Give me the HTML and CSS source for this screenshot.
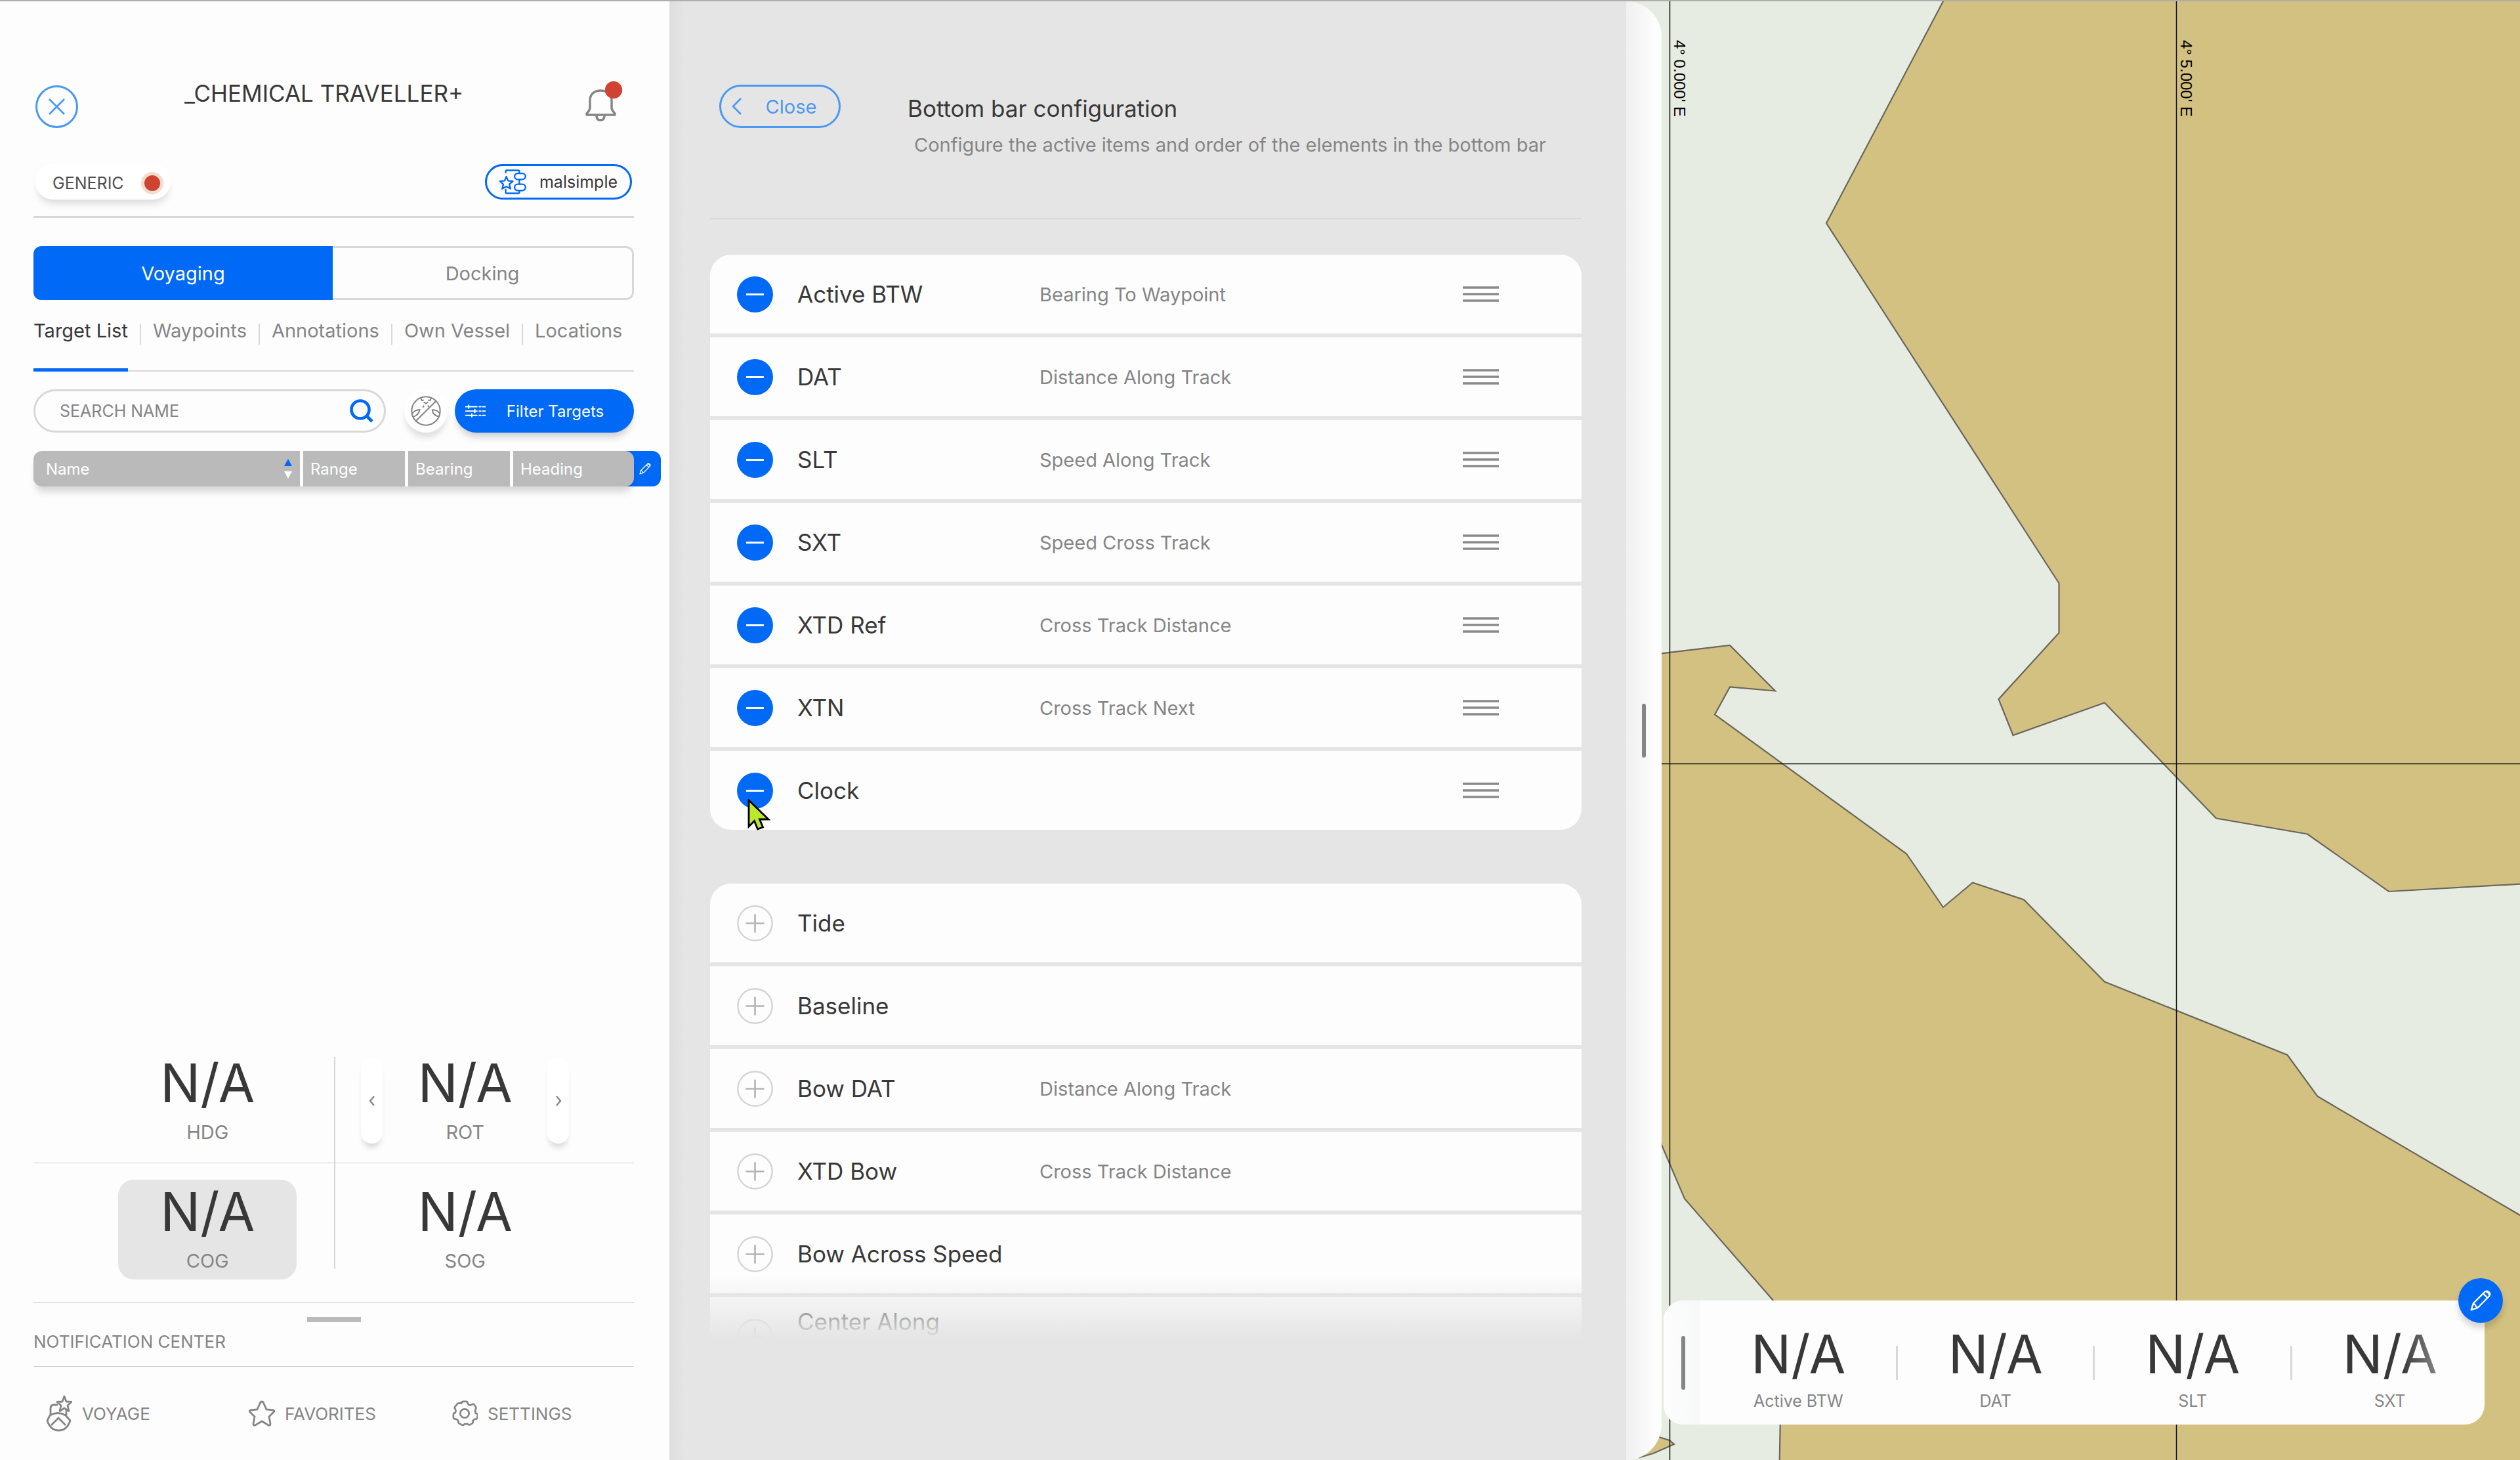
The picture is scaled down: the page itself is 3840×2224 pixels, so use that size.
FILE: index.html
```
<!DOCTYPE html>
<html lang="en">
<head>
<meta charset="utf-8">
<title>Bottom bar configuration</title>
<link rel="stylesheet" href="styles.css">
</head>
<body>
<svg class="sprite" aria-hidden="true">
  <symbol id="minus" viewBox="0 0 55 55"><circle cx="27.500" cy="27.500" r="27.500" fill="#0069f5"/><path d="M14 27.500h27" stroke="#fff" stroke-width="3"/></symbol>
  <symbol id="plus" viewBox="0 0 55 55"><circle cx="27.500" cy="27.500" r="26.200" fill="none" stroke="#d4d4d4" stroke-width="2.400"/><path d="M13.500 27.500h28M27.500 13.500v28" stroke="#b4b4b4" stroke-width="2.600"/></symbol>
  <symbol id="grip" viewBox="0 0 55 26"><path d="M0 3h55M0 13h55M0 23h55" stroke="#8a8a8a" stroke-width="3.400"/></symbol>
  <symbol id="pencil" viewBox="0 0 40 40"><path d="M4 36l3.500-11L27 5.500q3.500-3 7 .3t.4 7L15 32.500zM7.500 25l3 2 1.700 3.300 2.800 2.200M24.500 8.500l7 7M29.500 5.500q5 1 5 6" fill="none" stroke="#fff" stroke-width="2.600" stroke-linejoin="round"/></symbol>
</svg>
<div class="app">
  <aside class="sidebar">
    <header class="vessel">
      <button class="dismiss" aria-label="Close panel"><svg viewBox="0 0 65 65"><path d="M21 21l23 23M44 21L21 44" stroke="#4a98f0" stroke-width="2.600"/></svg></button>
      <h1 class="vessel-name">_CHEMICAL TRAVELLER+</h1>
      <button class="bell" aria-label="Notifications"><svg viewBox="885 118 66 68"><g fill="none" stroke="#858585" stroke-width="3.400" stroke-linejoin="round"><path d="M899 163v-12c0-10 7-15 16-15s17 5 17 15v12q1 4 5 8v2h-43v-2q4-4 5-8z"/><path d="M909 174q0 7 6 7t6-7"/></g><circle cx="935" cy="135" r="13.200" fill="#d04333"/></svg></button>
    </header>
    <div class="profile">
      <button class="generic">GENERIC<span class="status"></span></button>
      <button class="route"><svg viewBox="0 0 124 114"><g fill="none" stroke="#0069f5" stroke-width="7" stroke-linejoin="round" stroke-linecap="round"><path d="M32 33l8 19 22 2-16 14 5 21-19-11-19 11 5-21L2 54l22-2z"/><path d="M29 15V8q0-4 4-4h54q5 0 5 5v8M92 47v20M92 98v7q0 5-5 5H33q-4 0-4-4V92"/><rect x="70" y="18" width="50" height="28" rx="14"/><rect x="70" y="68" width="50" height="29" rx="14"/></g></svg>malsimple</button>
    </div>
    <div class="mode">
      <button class="mode-option selected">Voyaging</button>
      <button class="mode-option">Docking</button>
    </div>
    <nav class="tabs">
      <a class="tab current" href="#">Target List</a><i></i>
      <a class="tab" href="#">Waypoints</a><i></i>
      <a class="tab" href="#">Annotations</a><i></i>
      <a class="tab" href="#">Own Vessel</a><i></i>
      <a class="tab" href="#">Locations</a>
    </nav>
    <div class="tools">
      <div class="search">
        <input class="search-input" type="text" placeholder="SEARCH NAME" aria-label="Search name">
        <button class="search-button" aria-label="Search"><svg viewBox="0 0 36 36"><circle cx="16" cy="16" r="13.500" fill="none" stroke="#0069f5" stroke-width="4.600"/><path d="M25.500 25.500l8.500 8.500" stroke="#0069f5" stroke-width="5"/></svg></button>
      </div>
      <button class="globe" aria-label="Hide anchored"><svg viewBox="0 0 136 136"><g fill="none" stroke="#858585" stroke-width="6"><circle cx="68" cy="68" r="64"/><path d="M23 113L114 23M5 80q14-17 35-18-4 26-31 33M131 80q-14-18-34-17 2 24 29 31M44 9l6 12 8-2M92 9l-5 12-8-2M58 28l10 7 10-7M54 52l6-8M76 43l6 7"/></g></svg></button>
      <button class="filter"><svg viewBox="0 0 94 62"><path d="M2 10h52M2 30h52M2 50h52M16 3v14M44 23v14M30 43v14M64 10h8M64 30h8M64 50h8M80 10h12M80 30h12M80 50h12" stroke="#fff" stroke-width="6" stroke-linecap="round"/></svg>Filter Targets</button>
    </div>
    <div class="targets">
      <table class="target-table">
        <thead><tr>
          <th class="col-name"><span class="sortable">Name<svg viewBox="0 0 12 30"><path d="M6 0l6 11H0z" fill="#0069f5"/><path d="M0 19h12L6 30z" fill="#fff"/></svg></span></th>
          <th class="col-mid">Range</th><th class="col-mid">Bearing</th><th>Heading</th>
        </tr></thead>
      </table>
      <button class="edit-columns" aria-label="Edit columns"><svg><use href="#pencil"/></svg></button>
    </div>

    <section class="gauges">
      <div class="gauge-row">
        <div class="gauge"><strong>N/A</strong><span>HDG</span></div>
        <div class="stepper">
          <button class="step" aria-label="Previous"><svg viewBox="0 0 10 16"><path d="M8 1L2 8l6 7" fill="none" stroke="#858585" stroke-width="2.400"/></svg></button>
          <div class="gauge"><strong>N/A</strong><span>ROT</span></div>
          <button class="step" aria-label="Next"><svg viewBox="0 0 10 16"><path d="M2 1l6 7-6 7" fill="none" stroke="#858585" stroke-width="2.400"/></svg></button>
        </div>
      </div>
      <div class="gauge-row lower">
        <div class="gauge active"><strong>N/A</strong><span>COG</span></div>
        <div class="gauge"><strong>N/A</strong><span>SOG</span></div>
      </div>
    </section>
    <section class="notifications">
      <div class="drag"></div>
      <h2>NOTIFICATION CENTER</h2>
    </section>
    <nav class="menu">
      <a href="#"><svg class="voyage-icon" viewBox="0 0 40 56"><g fill="none" stroke="#858585" stroke-width="2.800" stroke-linejoin="round"><path d="M28 2l3 8 8 .5-6 5.500 2 8.500-7-4.500-7 4.500 2-8.500-6-5.500 8-.5z"/><path d="M18 15h-6q-5 0-5 6v9M31 22v9M6 31q12-7 24 0l7 8q-5 15-17.500 15T2 39zM8 46l11-11 11 11"/></g></svg>VOYAGE</a>
      <a href="#"><svg viewBox="0 0 40 40"><path d="M20 2q2 0 3 3l4 9 10 1q3 1 1 3l-7 7 2 11q0 3-3 2l-10-6-10 6q-3 1-3-2l2-11-7-7q-2-2 1-3l10-1 4-9q1-3 3-3z" fill="none" stroke="#858585" stroke-width="2.800"/></svg>FAVORITES</a>
      <a href="#"><svg viewBox="0 0 42 42"><g fill="none" stroke="#858585" stroke-width="2.800" stroke-linejoin="round"><circle cx="21" cy="21" r="7"/><path d="M16 5q0-3 3-3h4q3 0 3 3l1 2 3 1 2-1q3-2 5 1l2 3q1 2-1 4v3l1 3q3 0 3 3l-1 4q-1 3-3 2l-2 1-2 2q1 3-1 4l-3 2q-2 1-4-1h-5q-3 3-5 1l-4-2q-2-2-1-4l-2-2-3-1q-3 0-3-3v-4q0-3 3-3l1-3-1-3q-2-2 0-4l3-4q2-2 4-1l2-1z"/></g></svg>SETTINGS</a>
    </nav>
  </aside>

  <main class="config">
    <header class="config-head">
      <button class="close"><svg viewBox="0 0 16 26"><path d="M14 1L2 13l12 12" fill="none" stroke="#4a98f0" stroke-width="2.600"/></svg>Close</button>
      <div class="config-text">
        <h2>Bottom bar configuration</h2>
        <p>Configure the active items and order of the elements in the bottom bar</p>
      </div>
    </header>
    <div class="lists">
      <ul class="list">
        <li class="item"><button class="toggle" aria-label="Remove"><svg><use href="#minus"/></svg></button><span class="name">Active BTW</span><span class="desc">Bearing To Waypoint</span><svg class="grip"><use href="#grip"/></svg></li>
        <li class="item"><button class="toggle" aria-label="Remove"><svg><use href="#minus"/></svg></button><span class="name">DAT</span><span class="desc">Distance Along Track</span><svg class="grip"><use href="#grip"/></svg></li>
        <li class="item"><button class="toggle" aria-label="Remove"><svg><use href="#minus"/></svg></button><span class="name">SLT</span><span class="desc">Speed Along Track</span><svg class="grip"><use href="#grip"/></svg></li>
        <li class="item"><button class="toggle" aria-label="Remove"><svg><use href="#minus"/></svg></button><span class="name">SXT</span><span class="desc">Speed Cross Track</span><svg class="grip"><use href="#grip"/></svg></li>
        <li class="item"><button class="toggle" aria-label="Remove"><svg><use href="#minus"/></svg></button><span class="name">XTD Ref</span><span class="desc">Cross Track Distance</span><svg class="grip"><use href="#grip"/></svg></li>
        <li class="item"><button class="toggle" aria-label="Remove"><svg><use href="#minus"/></svg></button><span class="name">XTN</span><span class="desc">Cross Track Next</span><svg class="grip"><use href="#grip"/></svg></li>
        <li class="item"><button class="toggle" aria-label="Remove"><svg><use href="#minus"/></svg></button><span class="name">Clock</span><span class="desc"></span><svg class="grip"><use href="#grip"/></svg>
          <svg class="pointer" viewBox="0 0 36 48"><path d="M2 2v40l8.500-8.500L15.500 46l8-3-5-12H32z" fill="#bce82c" stroke="#000" stroke-width="2.800"/></svg></li>
      </ul>
      <ul class="list">
        <li class="item"><button class="toggle" aria-label="Add"><svg><use href="#plus"/></svg></button><span class="name">Tide</span></li>
        <li class="item"><button class="toggle" aria-label="Add"><svg><use href="#plus"/></svg></button><span class="name">Baseline</span></li>
        <li class="item"><button class="toggle" aria-label="Add"><svg><use href="#plus"/></svg></button><span class="name">Bow DAT</span><span class="desc">Distance Along Track</span></li>
        <li class="item"><button class="toggle" aria-label="Add"><svg><use href="#plus"/></svg></button><span class="name">XTD Bow</span><span class="desc">Cross Track Distance</span></li>
        <li class="item"><button class="toggle" aria-label="Add"><svg><use href="#plus"/></svg></button><span class="name">Bow Across Speed</span></li>
        <li class="item"><button class="toggle" aria-label="Add"><svg><use href="#plus"/></svg></button><span class="name upper">Center Along</span></li>
      </ul>
    </div>
  </main>
  <div class="splitter"><span></span></div>

  <section class="chart">
    <svg class="chart-map" viewBox="2478 2 1362 2222" preserveAspectRatio="xMinYMin slice">
      <g fill="#d3c181" stroke="#6b665c" stroke-width="2.200">
        <path d="M2962 0L2783 340l354.500 548.500V964l-92 101 22 55L3207 1070.500l170 176 139 24 124 87.500 210-12V0z"/>
        <path d="M2470 1005L2532 995.400 2636 983l69 69.500-69-6-23 42 292 212 56 81.500 45-37.500 78 26 123 125 278.500 111.500L3531.400 1670 3850 1857v380H2711.500L2714 2100 2702 1981 2567 1826 2532 1744 2470 1600z"/>
        <path d="M2510 2178l18 11 16 5 7 6-32 14-20 6z"/>
      </g>
      <path d="M2478 1163.500H3840M2544.500 0V2224M3316.500 0V2224" stroke="#111" stroke-width="1.500"/>
    </svg>
    <span class="meridian first">4° 0.000' E</span>
    <span class="meridian second">4° 5.000' E</span>
    <div class="bottom-bar">
      <div class="bar-handle"><span></span></div>
      <div class="bar-items">
        <div class="bar-item"><strong>N/A</strong><span>Active BTW</span></div>
        <div class="bar-item"><strong>N/A</strong><span>DAT</span></div>
        <div class="bar-item"><strong>N/A</strong><span>SLT</span></div>
        <div class="bar-item"><strong class="fading">N/A</strong><span>SXT</span></div>
      </div>
      <button class="edit-bar" aria-label="Edit bottom bar"><svg><use href="#pencil"/></svg></button>
    </div>
  </section>
</div>
</body>
</html>
```
FILE: styles.css
```
* { box-sizing: border-box; }
body { margin: 0; font-family: Inter, "Liberation Sans", sans-serif; font-weight: 400; font-size: 29px; color: #858585; }
button { font: inherit; color: inherit; background: none; border: 0; padding: 0; display: flex; align-items: center; justify-content: center; }
h1, h2, p, ul { margin: 0; padding: 0; font-weight: 400; list-style: none; }
a { color: inherit; text-decoration: none; }
svg { display: block; flex: none; }
strong { font-weight: 400; font-size: 81px; color: #383838; }
.sprite { position: absolute; width: 0; height: 0; }
.app { display: flex; height: 100vh; border-top: 2px solid #adadad; overflow: hidden; background: #e5e5e5; }

/* Sidebar */
.sidebar { width: 1020px; flex: none; padding: 118px 54px 0 51px; background: #fdfdfd; display: flex; flex-direction: column; }
.vessel { display: grid; grid-template-columns: 68px 1fr 101px; align-items: start; height: 75px; padding-left: 3px; }
.dismiss { width: 65px; height: 65px; margin-top: 10px; border: 3px solid #4a98f0; border-radius: 50%; }
.dismiss svg { width: 65px; height: 65px; }
.vessel-name { text-align: center; font-size: 35px; line-height: 44px; color: #383838; }
.bell { justify-content: flex-start; padding-left: 20px; }
.bell svg { width: 66px; height: 68px; }
.profile { display: flex; justify-content: space-between; margin-top: 55px; padding: 0 3px 25px; border-bottom: 3px solid #d8d8d8; }
.generic { width: 206px; height: 54px; padding: 4px 0 0 26px; justify-content: flex-start; font-size: 25px; color: #505050; background: #fff; border-radius: 27px; box-shadow: 0 10px 12px -4px rgba(0, 0, 0, .14); gap: 26px; }
.status { width: 34px; height: 34px; border-radius: 50%; background: #d04333; border: 5px solid #f1ddcf; }
.route { width: 224px; height: 54px; border: 3px solid #0069f5; border-radius: 27px; font-size: 25px; color: #383838; gap: 20px; }
.route svg { width: 41px; height: 38px; }
.mode { display: flex; margin-top: 43px; height: 82px; }
.mode-option { flex: 1; border: 3px solid #d8d8d8; border-left: 0; border-radius: 0 12px 12px 0; }
.mode-option.selected { border: 0; background: #0069f5; color: #fff; border-radius: 12px 0 0 12px; }
.tabs { display: flex; gap: 18px; margin-top: 32px; height: 77px; border-bottom: 2px solid #d8d8d8; }
.tabs i { width: 2px; height: 32px; margin-top: 4px; background: #d8d8d8; }
.tab { line-height: 30px; white-space: nowrap; }
.tab.current { color: #383838; border-bottom: 5px solid #0069f5; margin-bottom: -2px; }
.tools { display: flex; margin-top: 27px; height: 66px; }
.search { flex: 1; display: flex; align-items: center; border: 3px solid #d8d8d8; border-radius: 33px; padding: 0 16px 0 37px; }
.search-input { flex: 1; min-width: 0; border: 0; padding: 0; background: none; font: inherit; font-size: 25px; color: #383838; outline: 0; }
.search-input::placeholder { color: #858585; opacity: 1; }
.search-button svg { width: 36px; height: 36px; }
.globe { width: 66px; margin: 0 11px 0 28px; border-radius: 50%; background: #fff; box-shadow: 0 10px 10px -2px rgba(0, 0, 0, .12); }
.globe svg { width: 46px; height: 46px; }
.filter { width: 273px; border-radius: 33px; background: #0069f5; color: #fff; font-size: 24px; gap: 32px; padding-right: 30px; box-shadow: 0 10px 12px -4px rgba(0, 0, 0, .2); }
.filter svg { width: 31px; height: 21px; }
.targets { display: flex; margin: 28px -41px 0 0; }
.target-table { position: relative; z-index: 1; width: 915px; table-layout: fixed; border-spacing: 0; border-radius: 13px; overflow: hidden; box-shadow: 0 12px 12px -4px rgba(0, 0, 0, .16); }
.target-table th { height: 54px; padding: 0 0 0 11px; background: #bababa; color: #fff; text-align: left; font-weight: 400; font-size: 24px; border-right: 5px solid #fdfdfd; }
.target-table th:last-child { border-right: 0; }
.target-table .col-name { width: 411px; padding: 0 12px 0 19px; }
.target-table .col-mid { width: 160px; }
.sortable { display: flex; align-items: center; justify-content: space-between; }
.sortable svg { width: 12px; height: 30px; }
.edit-columns { width: 53px; margin-left: -12px; padding-left: 5px; background: #0069f5; border-radius: 0 13px 13px 0; }
.edit-columns svg { width: 20px; height: 20px; }

.gauges { position: relative; margin-top: auto; border-bottom: 1px solid #cfcfcf; }
.gauges::after { content: ""; position: absolute; left: 50%; top: 9px; bottom: 51px; width: 2px; background: #d6d6d6; }
.gauge-row { display: grid; grid-template-columns: 1fr 1fr; justify-items: center; align-items: center; padding: 0 61px 18px 69px; border-bottom: 1px solid #cfcfcf; }
.gauge-row.lower { padding-top: 25px; padding-bottom: 35px; border: 0; }
.gauge { width: 272px; height: 152px; display: flex; flex-direction: column; align-items: center; border-radius: 24px; }
.gauge strong { line-height: 98px; }
.gauge span { line-height: 52px; }
.gauge.active { background: #e5e5e5; }
.stepper { display: grid; grid-template-columns: 33px 251px 33px; justify-items: center; align-items: center; }
.step { width: 33px; height: 130px; border-radius: 17px; background: #fff; box-shadow: 0 10px 10px -4px rgba(0, 0, 0, .16); }
.step svg { width: 10px; height: 16px; }
.notifications { padding: 21px 0 17px; border-bottom: 1px solid #cfcfcf; }
.drag { width: 82px; height: 8px; margin: 0 auto 10px; background: #bbb; }
.notifications h2 { font-size: 26px; line-height: 40px; }
.menu { display: grid; grid-template-columns: repeat(3, 309px); height: 142px; padding-left: 19px; font-size: 26px; }
.menu a { display: flex; align-items: center; gap: 15px; }
.menu svg { width: 40px; height: 40px; }
.menu .voyage-icon { height: 56px; }

/* Configuration panel */
.config { width: 1458px; flex: none; padding: 127px 68px 0 62px; background: linear-gradient(90deg, #dedede, #e5e5e5 24px); display: flex; flex-direction: column; }
.config-head { display: flex; align-items: flex-start; gap: 102px; padding: 0 0 89px 14px; border-bottom: 2px solid #d9d9d9; }
.close { width: 185px; height: 66px; border: 3px solid #4a98f0; border-radius: 33px; color: #4a98f0; gap: 36px; padding-right: 18px; }
.close svg { width: 16px; height: 26px; }
.config-text { margin-top: 14px; line-height: 44px; }
.config-text h2 { font-size: 35px; color: #383838; }
.config-text p { margin: 12px 0 0 10px; }
.lists { position: relative; flex: 1; min-height: 0; margin: 54px 0 184px; overflow: hidden; }
.lists::after { content: ""; position: absolute; inset: auto 0 0; height: 100px; background: linear-gradient(rgba(229, 229, 229, 0), #e5e5e5); }
.list { display: grid; gap: 6px; margin-bottom: 82px; }
.item { position: relative; display: flex; align-items: center; gap: 37px; height: 120px; padding: 0 126px 0 41px; background: #fdfdfd; }
.item:first-child { border-radius: 32px 32px 0 0; }
.item:last-child { border-radius: 0 0 32px 32px; }
.toggle svg { width: 55px; height: 55px; }
.name { width: 332px; flex: none; font-size: 35px; line-height: 46px; color: #383838; }
.name.upper { align-self: flex-start; padding-top: 14px; }
.desc { flex: 1; }
.grip { width: 55px; height: 26px; }
.pointer { position: absolute; left: 57px; top: 73px; width: 36px; height: 48px; }

.splitter { position: relative; z-index: 1; width: 54px; flex: none; display: flex; align-items: center; justify-content: center; background: linear-gradient(90deg, #f0f0f0, #fdfdfd 44px); border-radius: 0 54px 54px 0; }
.splitter span { width: 6px; height: 82px; border-radius: 3px; background: #858585; }

/* Chart */
.chart { position: relative; flex: 1; margin-left: -54px; background: #e6ece1; }
.chart-map { position: absolute; inset: 0; width: 100%; height: 100%; }
.meridian { position: absolute; top: 59px; writing-mode: vertical-rl; font: 24px "Liberation Sans", sans-serif; color: #000; line-height: 28px; white-space: nowrap; }
.meridian.first { left: 67px; }
.meridian.second { left: 839px; }
.bottom-bar { position: absolute; left: 57px; right: 54px; bottom: 54px; display: flex; height: 189px; background: #fdfdfd; border-radius: 30px; }
.bar-handle { width: 55px; flex: none; display: flex; align-items: center; justify-content: center; padding-left: 5px; background: linear-gradient(90deg, #fdfdfd, #f7f8f8); border-radius: 30px 0 0 30px; }
.bar-handle span { width: 6px; height: 82px; border-radius: 3px; background: #858585; }
.bar-items { flex: 1; display: grid; grid-template-columns: repeat(4, 1fr); margin-right: -6px; }
.bar-item { position: relative; display: flex; flex-direction: column; align-items: center; padding-top: 33px; font-size: 25px; }
.bar-item strong { line-height: 98px; }
.bar-item span { line-height: 44px; }
.bar-item + .bar-item::before { content: ""; position: absolute; left: -2px; top: 69px; width: 3px; height: 52px; background: #d8d8d8; }
.bar-item .fading { color: transparent; background: linear-gradient(90deg, #383838 62%, #858585); background-clip: text; }
.edit-bar { position: absolute; right: -28px; top: -34px; width: 68px; height: 68px; border-radius: 50%; background: #0069f5; box-shadow: 0 8px 10px rgba(0, 0, 0, .16); }
.edit-bar svg { width: 36px; height: 36px; }
```
